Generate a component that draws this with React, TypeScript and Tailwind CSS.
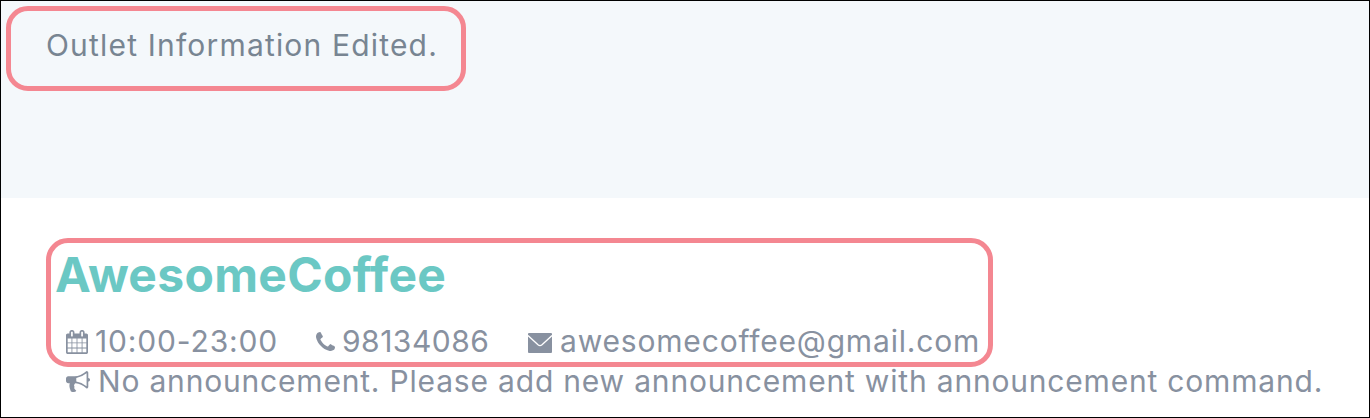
import type { ReactNode } from "react";

function Glyph({ viewBox, className, d }: { viewBox: string; className: string; d: string }) {
  return (
    <svg viewBox={viewBox} preserveAspectRatio="none" className={className} fill="currentColor" aria-hidden="true">
      <path transform="scale(1,-1)" d={d} />
    </svg>
  );
}

const CALENDAR =
  "M128 -128h288v288h-288v-288zM480 -128h320v288h-320v-288zM128 224h288v320h-288v-320zM480 224h320v320h-320v-320zM128 608h288v288h-288v-288zM864 -128h320v288h-320v-288zM480 608h320v288h-320v-288zM1248 -128h288v288h-288v-288zM864 224h320v320h-320v-320zM512 1088v288q0 13 -9.5 22.5t-22.5 9.5h-64q-13 0 -22.5 -9.5t-9.5 -22.5v-288q0 -13 9.5 -22.5t22.5 -9.5h64q13 0 22.5 9.5t9.5 22.5zM1248 224h288v320h-288v-320zM864 608h320v288h-320v-288zM1248 608h288v288h-288v-288zM1280 1088v288q0 13 -9.5 22.5t-22.5 9.5h-64q-13 0 -22.5 -9.5t-9.5 -22.5v-288q0 -13 9.5 -22.5t22.5 -9.5h64q13 0 22.5 9.5t9.5 22.5zM1664 1152v-1280q0 -52 -38 -90t-90 -38h-1408q-52 0 -90 38t-38 90v1280q0 52 38 90t90 38h128v96q0 66 47 113t113 47h64q66 0 113 -47t47 -113v-96h384v96q0 66 47 113t113 47h64q66 0 113 -47t47 -113v-96h128q52 0 90 -38t38 -90z";
const PHONE =
  "M1408 296q0 -27 -10 -70.5t-21 -68.5q-21 -50 -122 -106q-94 -51 -186 -51q-27 0 -53 3.5t-57.5 12.5t-47 14.5t-55.5 20.5t-49 18q-98 35 -175 83q-127 79 -264 216t-216 264q-48 77 -83 175q-3 9 -18 49t-20.5 55.5t-14.5 47t-12.5 57.5t-3.5 53q0 92 51 186q56 101 106 122q25 11 68.5 21t70.5 10q14 0 21 -3q18 -6 53 -76q11 -19 30 -54t35 -63.5t31 -53.5q3 -4 17.5 -25t21.5 -35.5t7 -28.5q0 -20 -28.5 -50t-62 -55t-62 -53t-28.5 -46q0 -9 5 -22.5t8.5 -20.5t14 -24t11.5 -19q76 -137 174 -235t235 -174q2 -1 19 -11.5t24 -14t20.5 -8.5t22.5 -5q18 0 46 28.5t53 62t55 62t50 28.5q14 0 28.5 -7t35.5 -21.5t25 -17.5q25 -15 53.5 -31t63.5 -35t54 -30q70 -35 76 -53q3 -7 3 -21z";
const BULLHORN =
  "M1664 896q53 0 90.5 -37.5t37.5 -90.5t-37.5 -90.5t-90.5 -37.5v-384q0 -52 -38 -90t-90 -38q-417 347 -812 380q-58 -19 -91 -66t-31 -100.5t40 -92.5q-20 -33 -23 -65.5t6 -58t33.5 -55t48 -50t61.5 -50.5q-29 -58 -111.5 -83t-168.5 -11.5t-132 55.5q-7 23 -29.5 87.5t-32 94.5t-23 89t-15 101t3.5 98.5t22 110.5h-122q-66 0 -113 47t-47 113v192q0 66 47 113t113 47h480q435 0 896 384q52 0 90 -38t38 -90v-384zM1536 292v954q-394 -302 -768 -343v-270q377 -42 768 -341z";

function Detail({ icon, className, children }: { icon: ReactNode; className: string; children: ReactNode }) {
  return (
    <div className={className}>
      {icon}
      {children}
    </div>
  );
}

export default function App() {
  return (
    <div className="relative flex h-[418px] w-[1370px] flex-col overflow-hidden whitespace-nowrap border border-black bg-white font-['Inter','Liberation_Sans',sans-serif] text-[30px] leading-10 text-[#8891a0]">
      <section className="h-[197px] shrink-0 bg-[#f4f8fb] pl-[45px] pt-6">
        <p className="text-[#788592]">
          <span className="tracking-[1.18px]">Outlet Information Edited.</span>
        </p>
      </section>

      <section className="flex flex-col pl-[54px] pt-[47px]">
        <h1 className="h-[60px] text-[48px] font-bold leading-[60px] text-[#6bc8c4]">
          <span className="tracking-[0.3px]">AwesomeCoffee</span>
        </h1>
        <div className="mt-4 flex h-10 pl-[11px]">
          <Detail
            className="flex w-[250px]"
            icon={<Glyph viewBox="0 -1536 1664 1792" className="mr-[7px] mt-[9px] h-6 w-[22px] shrink-0" d={CALENDAR} />}
          >
            <span className="tracking-[0.85px]">10:00-23:00</span>
          </Detail>
          <Detail
            className="flex w-[212px]"
            icon={<Glyph viewBox="0 -1408 1408 1408" className="mr-[7px] mt-[11px] size-[19px] shrink-0" d={PHONE} />}
          >
            <span className="tracking-[0.5px]">98134086</span>
          </Detail>
          <Detail
            className="flex"
            icon={
              <svg viewBox="0 0 24 20" className="mr-2 mt-3 h-5 w-6 shrink-0" aria-hidden="true">
                <rect width="24" height="20" rx="1" fill="currentColor" />
                <path d="M0 2.6 10 11.7Q12 13.4 14 11.7L24 2.6" fill="none" stroke="#fff" strokeWidth="1.3" />
              </svg>
            }
          >
            <span className="tracking-[0.82px]">awesomecoffee@gmail.com</span>
          </Detail>
        </div>
        <Detail
          className="flex h-10 pl-[11px]"
          icon={<Glyph viewBox="0 -1408 1792 1536" className="mr-2 mt-[10px] h-[21px] w-6 shrink-0" d={BULLHORN} />}
        >
          <span className="tracking-[0.81px]">No announcement. Please add new announcement with announcement command.</span>
        </Detail>
      </section>

      <div className="absolute left-[5px] top-[5px] h-[85px] w-[460px] rounded-[22px] border-[5px] border-[#f48791]" />
      <div className="absolute left-[45px] top-[237px] h-[129px] w-[947px] rounded-[22px] border-[5px] border-[#f48791]" />
    </div>
  );
}
